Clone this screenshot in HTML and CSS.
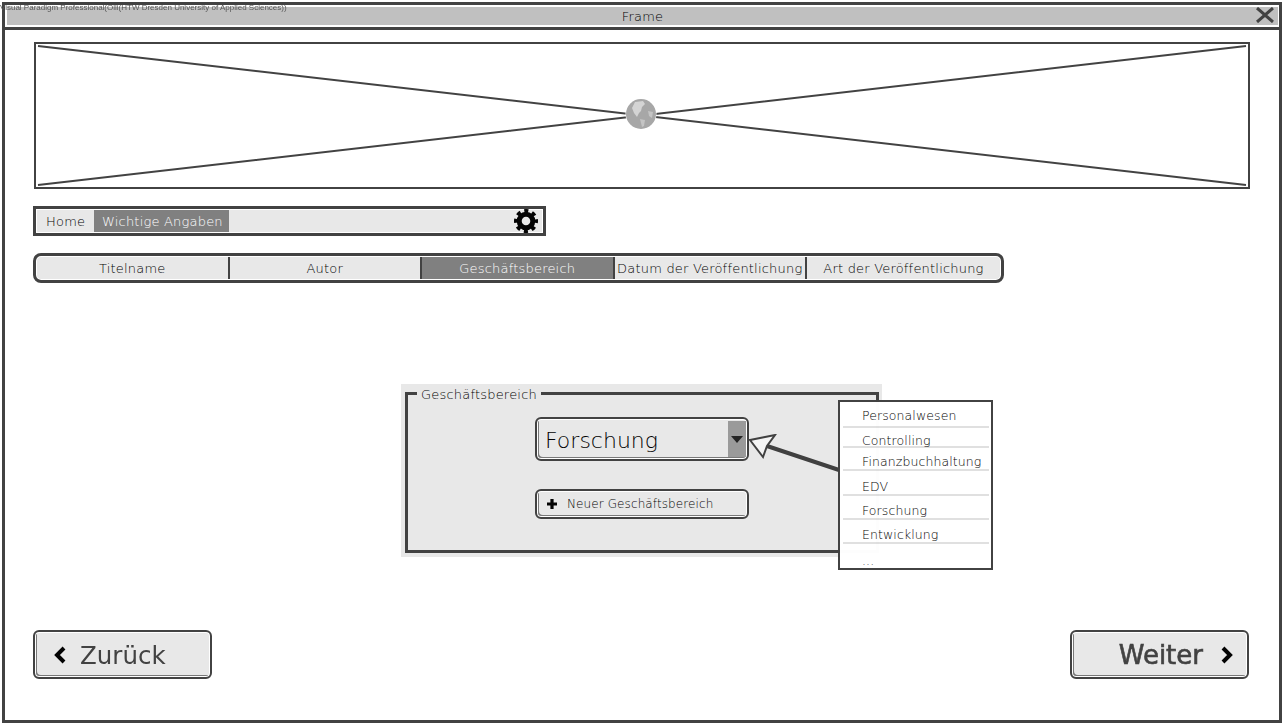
FILE: index.html
```html
<!DOCTYPE html>
<html lang="en">
<head>
    <meta charset="UTF-8">
    <meta name="viewport" content="width=device-width, initial-scale=1.0">
    <title>Frame</title>
    <link rel="stylesheet" href="styles.css">
</head>
<body>

    <div class="watermark">Visual Paradigm Professional(Olli(HTW Dresden University of Applied Sciences))</div>

    <div class="frame">
        <div class="titlebar">
            <span class="title">Frame</span>
            <svg class="close" viewBox="0 0 18 16" width="18" height="16">
                <path d="M1 1 L17 15 M17 1 L1 15" stroke="#404040" stroke-width="3" fill="none"/>
            </svg>
        </div>

        <div class="content">
            <div class="banner">
                <svg class="banner-lines" viewBox="0 0 1212 143" width="1212" height="143">
                    <path d="M2 2 L1210 141 M1210 2 L2 141" stroke="#404040" stroke-width="2" fill="none"/>
                </svg>
                <svg class="globe" viewBox="0 0 32 32" width="32" height="32">
                    <circle cx="16" cy="16" r="15.5" fill="#fff"/>
                    <circle cx="16" cy="16" r="15" fill="#a6a6a6"/>
                    <path d="M10 4 L18 3 L20 6 L17 9 L16 13 L14 15 L12 19 L9 15 L7 10 Z" fill="#d4d4d4"/>
                    <path d="M15 21 L20 22 L19 28 L17 29 Z M23 13 L28 14 L27 20 L24 18 Z" fill="#c4c4c4"/>
                </svg>
            </div>

            <div class="breadcrumb">
                <span class="crumb">Home</span>
                <span class="crumb crumb-active">Wichtige Angaben</span>
                <svg class="gear" viewBox="0 0 24 24" width="24" height="24">
                    <circle cx="12" cy="12" r="6.8" fill="none" stroke="#000" stroke-width="5"/>
                    <circle cx="12" cy="12" r="10" fill="none" stroke="#000" stroke-width="4" stroke-dasharray="4 3.85" stroke-dashoffset="2"/>
                </svg>
            </div>

            <div class="tabs">
                <div class="tab">Titelname</div>
                <div class="tab">Autor</div>
                <div class="tab tab-active">Geschäftsbereich</div>
                <div class="tab">Datum der Veröffentlichung</div>
                <div class="tab">Art der Veröffentlichung</div>
            </div>

            <div class="panel">
                <div class="group">
                    <span class="legend">Geschäftsbereich</span>
                    <div class="select">
                        <span class="select-value">Forschung</span>
                        <span class="select-arrow"><i class="caret"></i></span>
                    </div>
                    <div class="add-btn">
                        <svg viewBox="0 0 12 12" width="12" height="12">
                            <path d="M6 1 V11 M1 6 H11" stroke="#000" stroke-width="3.2" fill="none"/>
                        </svg>
                        <span>Neuer Geschäftsbereich</span>
                    </div>
                </div>
            </div>

            <div class="nav-buttons">
                <div class="nav-btn">
                    <svg viewBox="0 0 14 20" width="14" height="20">
                        <path d="M11 3 L4 10 L11 17" stroke="#000" stroke-width="4" fill="none"/>
                    </svg>
                    <span>Zurück</span>
                </div>
                <div class="nav-btn nav-btn-next">
                    <span>Weiter</span>
                    <svg viewBox="0 0 14 20" width="14" height="20">
                        <path d="M3 3 L10 10 L3 17" stroke="#000" stroke-width="4" fill="none"/>
                    </svg>
                </div>
            </div>
        </div>
    </div>

    <!-- callout sits over the panel -->
    <svg class="callout-arrow" viewBox="0 0 92 38" width="92" height="38">
        <path d="M91 36 L19 12" stroke="#404040" stroke-width="4" fill="none"/>
        <path d="M2 6 L27 1 L19 12 L15 23 Z" fill="#f4f4f4" stroke="#404040" stroke-width="2"/>
    </svg>

    <ul class="dropdown">
        <li>Personalwesen</li>
        <li>Controlling</li>
        <li>Finanzbuchhaltung</li>
        <li>EDV</li>
        <li>Forschung</li>
        <li>Entwicklung</li>
        <li>...</li>
    </ul>

</body>
</html>
```

FILE: styles.css
```css
body {
    margin: 0;
    height: 726px;
    background-color: white;
    font-family: "DejaVu Sans", sans-serif;
    font-weight: 200;
    color: #000;
    overflow: hidden;
    position: relative;
}

.watermark {
    position: absolute;
    z-index: 2;
    top: 3px;
    left: 0;
    font-family: "Liberation Sans", sans-serif;
    font-weight: 400;
    font-size: 8px;
    line-height: 10px;
    color: #555;
    white-space: nowrap;
    opacity: 0.99;
}

.frame {
    box-sizing: border-box;
    width: 1280px;
    height: 721px;
    margin: 2px 0 0 2px;
    border: 3px solid #404040;
    display: flex;
    flex-direction: column;
    opacity: 0.99;
}

.titlebar {
    height: 18px;
    margin: 2px 1px 2px 2px;
    background-color: #c0c0c0;
    display: flex;
    justify-content: center;
    align-items: center;
    position: relative;
    flex-shrink: 0;
}

.title {
    font-size: 13px;
    letter-spacing: 0.2px;
}

.close {
    position: absolute;
    right: 4px;
    top: 0;
}

.content {
    flex: 1;
    border-top: 3px solid #404040;
    padding: 12px 30px 41px 28px;
    display: flex;
    flex-direction: column;
}

.banner {
    box-sizing: border-box;
    width: 1216px;
    height: 147px;
    margin-left: 1px;
    border: 2px solid #404040;
    display: flex;
    justify-content: center;
    align-items: center;
    position: relative;
}

.banner-lines {
    position: absolute;
    top: 0;
    left: 0;
}

.globe {
    position: relative;
    margin: 0 2px 3px 0;
}

.breadcrumb {
    box-sizing: border-box;
    width: 513px;
    height: 30px;
    margin-top: 17px;
    border: 3px solid #404040;
    background-color: #e8e8e8;
    box-shadow: inset 0 0 0 1px #fff;
    display: flex;
    align-items: center;
    font-size: 13px;
    letter-spacing: 0.2px;
}

.crumb {
    line-height: 21px;
    padding-top: 1px;
}

.crumb:first-child {
    width: 38px;
    text-align: center;
    padding: 1px 10px 0;
}

.crumb-active {
    background-color: #7f7f7f;
    color: white;
    padding: 1px 8px 0;
    width: 119px;
    white-space: nowrap;
}

.gear {
    margin-left: auto;
    margin-right: 5px;
}

.tabs {
    box-sizing: border-box;
    width: 971px;
    height: 30px;
    margin-top: 17px;
    border: 3px solid #404040;
    border-radius: 8px;
    background-color: #e8e8e8;
    box-shadow: inset 0 0 0 1px #fff;
    padding: 1px;
    display: flex;
    font-size: 13px;
    letter-spacing: 0.2px;
}

.tab {
    flex: 0 0 192.5px;
    box-sizing: border-box;
    display: flex;
    justify-content: center;
    align-items: center;
    white-space: nowrap;
    border-right: 2px solid #404040;
}

.tab:last-child {
    flex: 1;
    border-right: none;
}

.tab-active {
    background-color: #7f7f7f;
    color: white;
}

.panel {
    box-sizing: border-box;
    width: 481px;
    height: 173px;
    margin: 101px 0 0 368px;
    padding: 8px 3px 4px 4px;
    background-color: #e8e8e8;
}

.group {
    box-sizing: border-box;
    height: 100%;
    border: 3px solid #404040;
    display: flex;
    flex-direction: column;
    align-items: center;
    position: relative;
    padding-top: 22px;
}

.legend {
    position: absolute;
    top: -9px;
    left: 9px;
    padding: 0 4px;
    background-color: #e8e8e8;
    font-size: 13px;
    letter-spacing: 0.2px;
    line-height: 18px;
}

.select, .add-btn, .nav-btn {
    box-sizing: border-box;
    border: 2px solid #404040;
    border-radius: 6px;
    background-color: #e8e8e8;
    box-shadow: inset 0 0 0 1px #fff, inset 2px -2px 0 0 #777;
    display: flex;
    align-items: center;
}

.select {
    width: 214px;
    height: 44px;
    padding: 2px 1px 2px 2px;
}

.select-value {
    flex: 1;
    padding: 2px 0 0 6px;
    font-size: 22px;
}

.select-arrow {
    width: 18px;
    height: 36px;
    background-color: #999;
    display: flex;
    justify-content: center;
    align-items: center;
}

.caret {
    border-left: 6px solid transparent;
    border-right: 6px solid transparent;
    border-top: 7px solid #222;
}

.add-btn {
    width: 214px;
    height: 30px;
    margin-top: 28px;
    padding-left: 9px;
    gap: 9px;
    font-size: 12px;
    letter-spacing: 0.1px;
    white-space: nowrap;
}

.nav-buttons {
    margin-top: auto;
    display: flex;
    justify-content: space-between;
}

.nav-btn {
    width: 179px;
    height: 49px;
    padding: 1px 13px 0 18px;
    gap: 13px;
    font-size: 24.5px;
    font-weight: 400;
    color: #404040;
}

.nav-btn-next {
    justify-content: flex-end;
    gap: 17px;
    font-size: 26px;
    -webkit-text-stroke: 0.6px #404040;
}

.callout-arrow {
    position: absolute;
    left: 748px;
    top: 434px;
}

.dropdown {
    position: absolute;
    left: 838px;
    top: 400px;
    box-sizing: border-box;
    width: 155px;
    height: 170px;
    margin: 0;
    padding: 0 2px 0 3px;
    list-style: none;
    border: 2px solid #404040;
    background-color: white;
    display: grid;
    grid-template-columns: minmax(0, 1fr);
    grid-template-rows: 26px 20px 23px 25px 24px 24px 24px;
    font-size: 12.5px;
    letter-spacing: 0.1px;
    opacity: 0.99;
}

.dropdown li {
    padding-left: 19px;
    border-bottom: 2px solid #e0e0e0;
    display: flex;
    align-items: flex-end;
    white-space: nowrap;
}

.dropdown li:first-child {
    padding-bottom: 3px;
}

/* text runs into the divider in the mockup */
.dropdown li:nth-child(2) {
    line-height: 11px;
}

.dropdown li:last-child {
    border-bottom: none;
}
```
